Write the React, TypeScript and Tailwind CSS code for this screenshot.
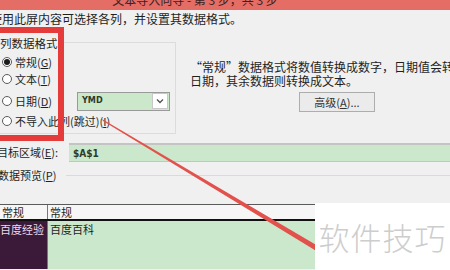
import React from 'react';

const Radio: React.FC<{ checked?: boolean }> = ({ checked }) => (
  <div className="ml-[2px] w-[10px] h-[10px] rounded-full border border-[#5a5a5a] bg-white flex items-center justify-center shrink-0">
    {checked && <div className="w-[6px] h-[6px] rounded-full bg-[#1a1a1a]" />}
  </div>
);

const App: React.FC = () => {
  return (
    <div className="relative w-[450px] h-[270px] overflow-hidden bg-[#f0f0f0] text-[#1f1f1f] text-[11px] font-['Noto_Sans_CJK_SC','Noto_Sans',sans-serif]">
      {/* Title bar */}
      <div className="h-[10px] bg-[#e46d66] overflow-hidden flex justify-center">
        <div className="-mt-[7px] -ml-[60px] text-[12px] leading-[14px] text-[#3d2020] whitespace-nowrap">
          文本导入向导 - 第 3 步，共 3 步
        </div>
      </div>

      {/* Description */}
      <div className="h-[17px] -ml-[10px] leading-[17px] text-[12px] whitespace-nowrap">
        使用此屏内容可选择各列，并设置其数据格式。
      </div>

      {/* Main */}
      <div className="flex h-[116px]">
        <div className="w-[176px] shrink-0">
          <div className="mt-[15px] h-[92px] border-t border-r border-b border-[#dcdcdc]">
            <div className="-mt-[7px] h-[14px] leading-[14px] w-fit pr-[4px] bg-[#f0f0f0] whitespace-nowrap text-[11.5px]">
              列数据格式
            </div>
            <div className="mt-[4px] h-[16px] flex items-center">
              <Radio checked />
              <span className="ml-[3px] leading-[16px]">常规(<span className="underline">G</span>)</span>
            </div>
            <div className="mt-[1px] h-[16px] flex items-center">
              <Radio />
              <span className="ml-[3px] leading-[16px]">文本(<span className="underline">T</span>)</span>
            </div>
            <div className="mt-[4px] h-[20px] flex items-center">
              <Radio />
              <span className="ml-[3px] w-[62px] leading-[16px]">日期(<span className="underline">D</span>)</span>
              <div className="w-[93px] h-[19px] flex items-center border border-[#9a9a9a] bg-[#cbe8cb]">
                <span className="ml-[4px] flex-1 text-[9px] font-bold text-[#2c3a2c] font-['DejaVu_Sans_Condensed',sans-serif]">YMD</span>
                <div className="w-[16px] h-[16px] mr-[1px] bg-white border border-[#c8c8c8] flex items-center justify-center">
                  <svg width="8" height="6" viewBox="0 0 8 6">
                    <path d="M1 1.5 L4 4.5 L7 1.5" fill="none" stroke="#555" strokeWidth="1.4" />
                  </svg>
                </div>
              </div>
            </div>
            <div className="mt-[2px] h-[16px] flex items-center">
              <Radio />
              <span className="ml-[3px] leading-[16px] whitespace-nowrap">
                不导入此列(跳过)(<span className="underline">I</span>)
              </span>
            </div>
          </div>
        </div>

        <div className="flex-1 pl-[14px]">
          <div className="mt-[33px] leading-[14px] text-[12px] whitespace-nowrap">
            <div>“常规”数据格式将数值转换成数字，日期值会转换成</div>
            <div>日期，其余数据则转换成文本。</div>
          </div>
          <div className="mt-[4px] ml-[109px] w-[76px] h-[20px] border border-[#adadad] bg-[#ebebeb] flex items-center justify-center text-[#333]">
            高级(<span className="underline">A</span>)...
          </div>
        </div>
      </div>

      {/* Target */}
      <div className="flex h-[19px] items-center">
        <div className="w-[72px] shrink-0 -ml-[3px] whitespace-nowrap">目标区域(<span className="underline">E</span>):</div>
        <div className="flex-1 h-[19px] -mr-[10px] border-t-2 border-b border-[#c4c4c4] bg-[#cce8cc] flex items-center">
          <span className="ml-[4px] text-[10px] font-bold text-[#2c3a2c] font-['DejaVu_Sans_Condensed',sans-serif]">$A$1</span>
        </div>
      </div>

      {/* Preview label */}
      <div className="mt-[6px] h-[14px] flex items-center">
        <span className="-ml-[2px] leading-[14px] whitespace-nowrap">数据预览(<span className="underline">P</span>)</span>
        <div className="ml-[10px] flex-1 border-t border-[#dadada]" />
      </div>

      {/* Preview grid */}
      <div className="mt-[22px] border-t border-[#5a5a5a]">
        <div className="flex h-[16px] bg-[#f6f6f6] border-b-2 border-[#111] leading-[15px]">
          <div className="w-[48px] pl-[2px] border-r border-[#777]">常规</div>
          <div className="pl-[2px]">常规</div>
        </div>
        <div className="flex h-[48px]">
          <div className="w-[48px] bg-[#3b1a39] border-r border-[#777] text-[#ecdcec] leading-[16px] whitespace-nowrap overflow-hidden">
            百度经验
          </div>
          <div className="flex-1 bg-[#cce8cc] pl-[2px] leading-[16px]">百度百科</div>
        </div>
      </div>

      {/* Highlight box */}
      <div className="absolute left-[-6px] top-[27px] w-[70px] h-[114px] border-[6px] border-[#e63b3b]" />

      {/* Arrow line */}
      <svg className="absolute inset-0 pointer-events-none" width="450" height="270" viewBox="0 0 450 270">
        <polygon points="102,119 103,121 318,252 318,246" fill="#e2514b" />
      </svg>

      {/* Watermark */}
      <div className="absolute right-0 bottom-0 w-[135px] h-[67px] bg-white flex items-center justify-center">
        <span className="text-[31px] leading-none text-[#cdcdcd] font-light tracking-[1px]">软件技巧</span>
      </div>
    </div>
  );
};

export default App;
